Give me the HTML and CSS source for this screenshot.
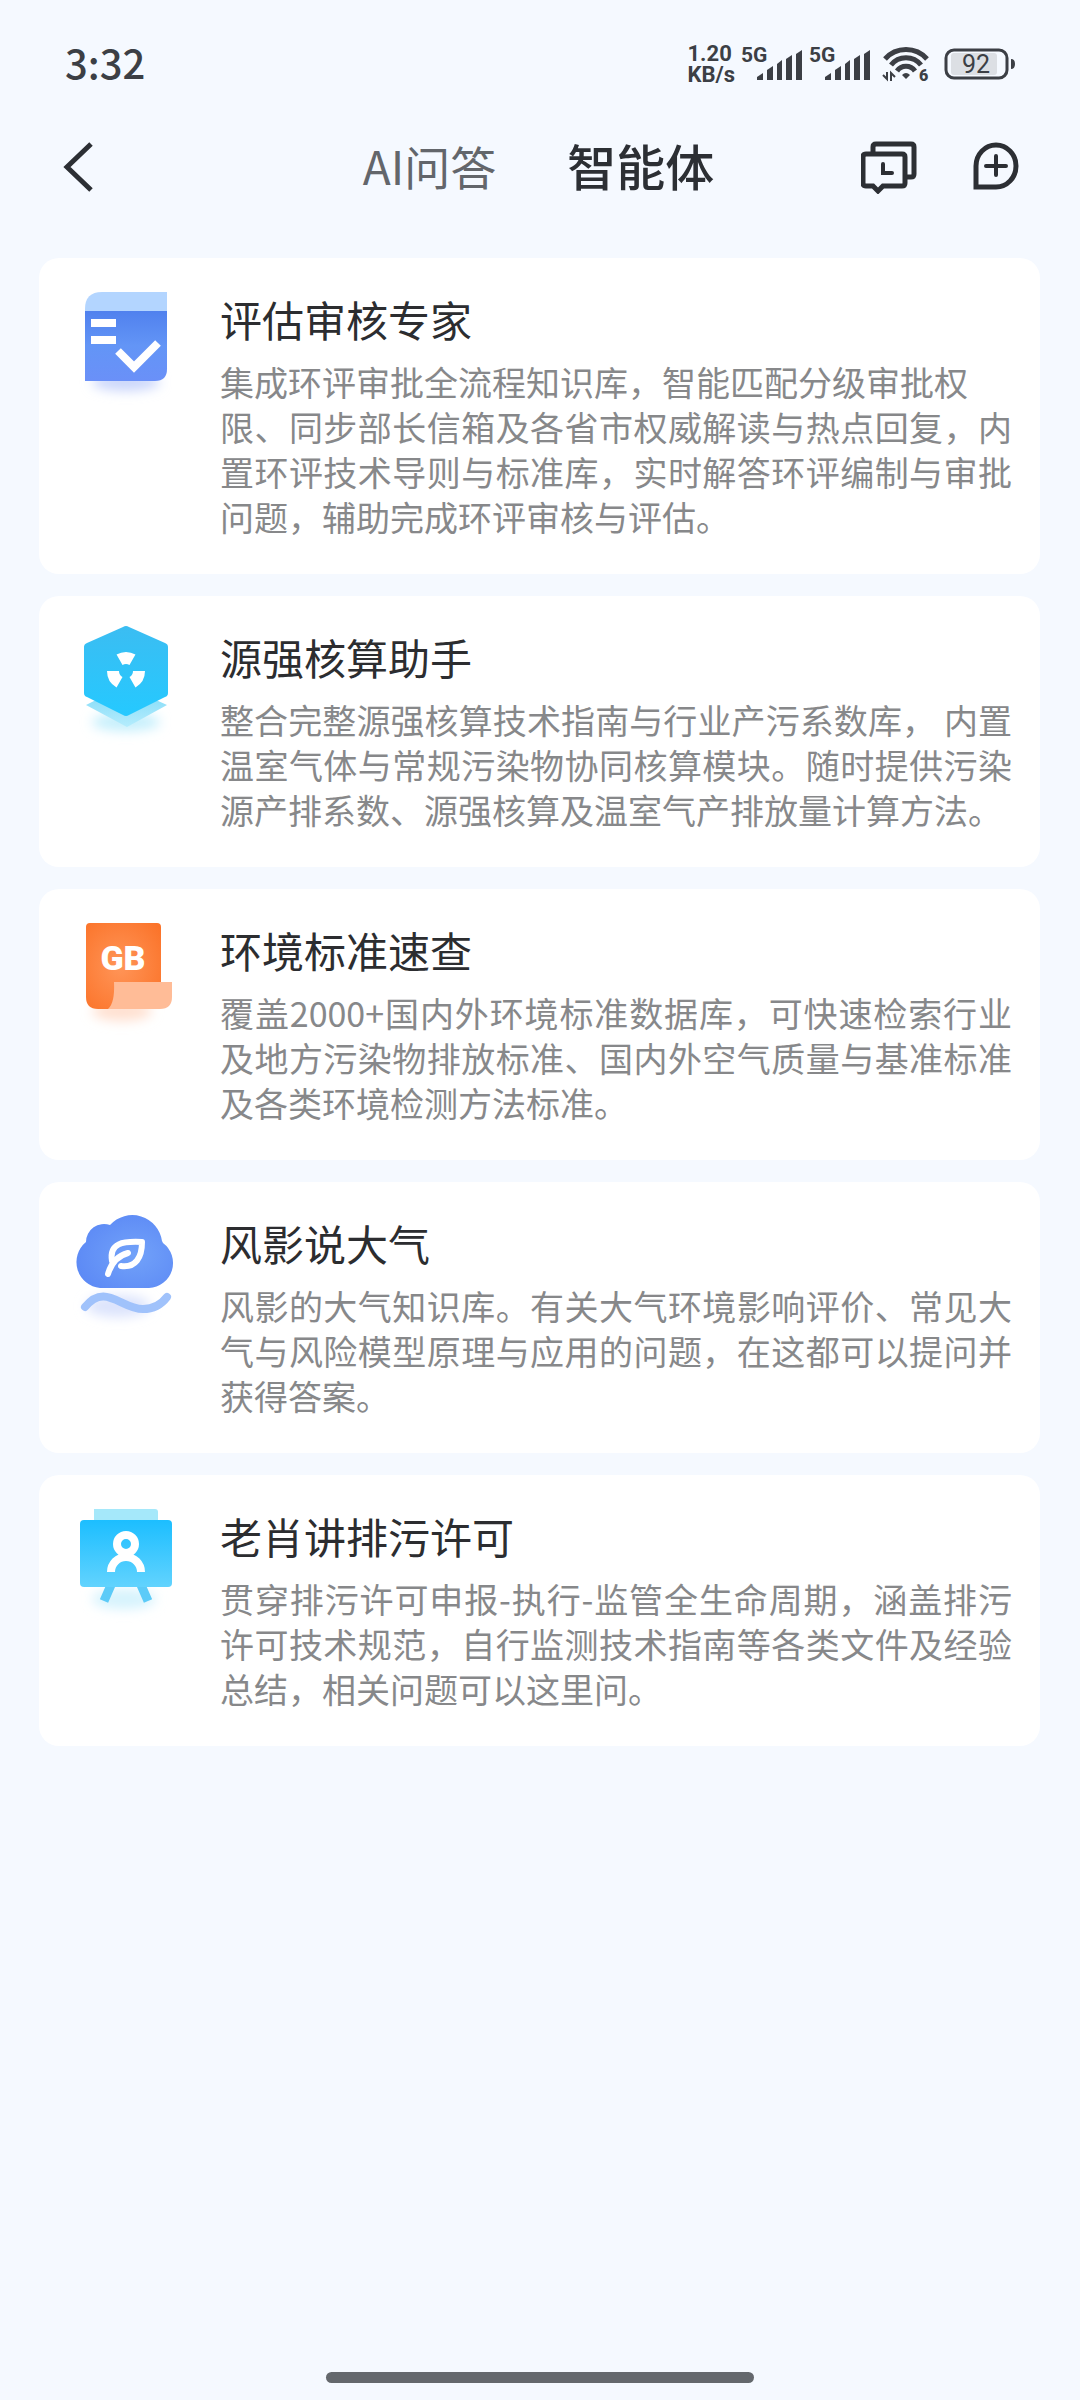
FILE: index.html
```html
<!DOCTYPE html>
<html lang="zh-CN">
<head>
  <meta charset="UTF-8" />
  <meta name="viewport" content="width=device-width, initial-scale=1.0" />
  <title>智能体</title>
  <link rel="stylesheet" href="styles.css">
</head>
<body>
  <div class="status-bar">
    <span class="time">3:32</span>
    <div class="status-icons">
      <span class="speed">1.20<br>KB/s</span>
      <svg class="signal" viewBox="0 -8 62 52">
        <text x="0" y="16">5G</text>
        <path d="M16 34v-3l6-4v7zM26 34V24l6-4v14zM36 34V18l5-4v20zM45 34V13l6-4v25zM55 34V8l6-4v30z" />
      </svg>
      <svg class="signal" viewBox="0 -8 62 52">
        <text x="0" y="16">5G</text>
        <path d="M16 34v-3l6-4v7zM26 34V24l6-4v14zM36 34V18l5-4v20zM45 34V13l6-4v25zM55 34V8l6-4v30z" />
      </svg>
      <svg class="wifi" viewBox="0 -8 50 52">
        <g fill="none" stroke="#3c3f45" stroke-width="5">
          <path d="M3 13a28 28 0 0 1 42 0" />
          <path d="M9 19a19 19 0 0 1 30 0" />
          <path d="M15 25a11 11 0 0 1 18 0" />
        </g>
        <path d="M20 29q4-4 8 0l-4 4z" />
        <path d="M5 26v7l-4-4M9 35v-8l4 4" fill="none" stroke="#3c3f45" stroke-width="2" />
        <text x="37" y="35">6</text>
      </svg>
      <svg class="battery" viewBox="0 -4 71 40">
        <rect x="7" y="5" width="46" height="22" rx="3" fill="#dcdfe4" />
        <rect x="2" y="2" width="61" height="28" rx="8" fill="none" stroke="#3c3f45" stroke-width="3" />
        <path d="M67 11q4 0 4 5t-4 5z" />
        <text x="32" y="25" text-anchor="middle">92</text>
      </svg>
    </div>
  </div>

  <header>
    <button class="icon-btn" aria-label="返回">
      <svg width="48" height="54" viewBox="0 0 48 54">
        <path d="M41 4L17 27l24 23" stroke-width="5" />
      </svg>
    </button>
    <nav>
      <button class="tab">AI问答</button>
      <button class="tab active">智能体</button>
    </nav>
    <div class="actions">
      <button class="icon-btn" aria-label="历史记录">
        <svg width="56" height="54" viewBox="0 0 56 54">
          <path d="M12 12V7q0-3 3-3h35q3 0 3 3v27q0 3-3 3h-5" stroke-width="5" />
          <path d="M5 14h36q3 0 3 3v26q0 3-3 3H22l-5 5-5-5H5q-3 0-3-3V17q0-3 3-3z" stroke-width="5" />
          <path d="M22 24v9h9" stroke-width="4" stroke-linecap="round" />
        </svg>
      </button>
      <button class="icon-btn" aria-label="新建对话">
        <svg width="46" height="54" viewBox="0 0 46 54">
          <path d="M3 47V26a20 21 0 1 1 20 21z" stroke-width="5" />
          <path d="M23 16v19M13 26h20" stroke-width="4" stroke-linecap="round" />
        </svg>
      </button>
    </div>
  </header>

  <main class="list">
    <article class="card">
      <svg class="card-icon" viewBox="0 0 120 130">
        <defs>
          <radialGradient id="blue" cx="0.6" cy="0.55" r="0.7">
            <stop offset="0" stop-color="#72a2f9" />
            <stop offset="1" stop-color="#5a87f5" />
          </radialGradient>
          <linearGradient id="page" x1="0" y1="0" x2="0" y2="1">
            <stop offset="0" stop-color="#5081ee" />
            <stop offset="0.5" stop-color="#6395f6" />
            <stop offset="1" stop-color="#6a90f8" />
          </linearGradient>
          <filter id="soft" x="-30%" y="-100%" width="160%" height="300%">
            <feGaussianBlur stdDeviation="6" />
          </filter>
        </defs>
        <ellipse cx="60" cy="104" rx="34" ry="9" fill="#c9d5fb" filter="url(#soft)" />
        <path d="M19 34v-3q0-17 17-17h65v20z" fill="#b3d5ff" />
        <path d="M19 33h82v58q0 12-12 12H19z" fill="url(#page)" />
        <path d="M25 41h25v8H25zM25 58h25v8H25z" fill="#fff" />
        <path d="M52 73l16 16 24-24" fill="none" stroke="#fff" stroke-width="8" />
      </svg>
      <div class="card-text">
        <h2>评估审核专家</h2>
        <p>集成环评审批全流程知识库，智能匹配分级审批权<br>限、同步部长信箱及各省市权威解读与热点回复，内置环评技术导则与标准库，实时解答环评编制与审批问题，辅助完成环评审核与评估。</p>
      </div>
    </article>

    <article class="card">
      <svg class="card-icon" viewBox="0 0 120 130">
        <defs>
          <linearGradient id="cyan" x1="0" y1="0" x2="0" y2="1">
            <stop offset="0" stop-color="#3bbdf2" />
            <stop offset="1" stop-color="#25c9ff" />
          </linearGradient>
          <linearGradient id="wedge" x1="0" y1="0" x2="0" y2="1">
            <stop offset="0" stop-color="#8fdff9" />
            <stop offset="1" stop-color="#b5edfd" />
          </linearGradient>
        </defs>
        <ellipse cx="60" cy="106" rx="34" ry="9" fill="#c4effc" filter="url(#soft)" />
        <path d="M20 89l10-5h60l11 5-40 22z" fill="url(#wedge)" />
        <path d="M57 11q3-2 6 0l36 16q3 1 3 4v46q0 3-3 4L63 99q-3 2-6 0L21 81q-3-1-3-4V31q0-3 3-4z" fill="url(#cyan)" />
        <circle cx="60" cy="55" r="13" fill="none" stroke="#fff" stroke-width="12" pathLength="6" stroke-dasharray="1 1" />
      </svg>
      <div class="card-text">
        <h2>源强核算助手</h2>
        <p>整合完整源强核算技术指南与行业产污系数库， 内置温室气体与常规污染物协同核算模块。随时提供污染源产排系数、源强核算及温室气产排放量计算方法。</p>
      </div>
    </article>

    <article class="card">
      <svg class="card-icon" viewBox="0 0 120 130">
        <defs>
          <radialGradient id="orange" cx="0.45" cy="0.5" r="0.7">
            <stop offset="0" stop-color="#ff9558" />
            <stop offset="1" stop-color="#fb7329" />
          </radialGradient>
        </defs>
        <ellipse cx="56" cy="102" rx="30" ry="10" fill="#ffe0d0" filter="url(#soft)" />
        <path d="M24 14h67q4 0 4 4v62H52l-6 20H32q-12 0-12-12V18q0-4 4-4z" fill="url(#orange)" />
        <path d="M48 73h58v15q0 12-12 12H42q7-6 6-27z" fill="#ffbc97" />
        <text class="gb" x="57" y="61" text-anchor="middle">GB</text>
      </svg>
      <div class="card-text">
        <h2>环境标准速查</h2>
        <p>覆盖2000+国内外环境标准数据库，可快速检索行业及地方污染物排放标准、国内外空气质量与基准标准及各类环境检测方法标准。</p>
      </div>
    </article>

    <article class="card">
      <svg class="card-icon" viewBox="0 0 120 130">
        <ellipse cx="52" cy="104" rx="32" ry="11" fill="#dbe3fc" filter="url(#soft)" />
        <path d="M34 86a26 26 0 0 1-14-46 18 18 0 0 1 24-17 30 30 0 0 1 52 16l1 2a25 25 0 0 1-14 45z" fill="url(#blue)" />
        <g fill="none" stroke="#fff" stroke-width="6" stroke-linecap="round" stroke-linejoin="round">
          <path d="M46 59c-3-18 11-20 30-19 0 15-6 26-21 24" />
          <path d="M42 72q5-17 20-21" />
        </g>
        <path d="M19 105c20-25 36 2 58 2 11 0 18-4 24-12" fill="none" stroke="#a0c2fb" stroke-width="8" stroke-linecap="round" />
      </svg>
      <div class="card-text">
        <h2>风影说大气</h2>
        <p>风影的大气知识库。有关大气环境影响评价、常见大气与风险模型原理与应用的问题，在这都可以提问并获得答案。</p>
      </div>
    </article>

    <article class="card">
      <svg class="card-icon" viewBox="0 0 120 130">
        <defs>
          <linearGradient id="board" x1="0" y1="0" x2="0" y2="1">
            <stop offset="0" stop-color="#1cbeff" />
            <stop offset="1" stop-color="#62d3fe" />
          </linearGradient>
        </defs>
        <ellipse cx="58" cy="104" rx="32" ry="10" fill="#d5f3fd" filter="url(#soft)" />
        <path d="M28 14h61q3 0 3 3v10H28z" fill="#a5e8fa" />
        <path d="M45 90l-7 16M75 90l7 16" stroke="#5ccbf8" stroke-width="9" />
        <rect x="14" y="25" width="92" height="67" rx="4" fill="url(#board)" />
        <circle cx="60" cy="49" r="9" fill="none" stroke="#fff" stroke-width="8" />
        <path d="M45 77a15 15 0 0 1 30 0" fill="none" stroke="#fff" stroke-width="8" />
      </svg>
      <div class="card-text">
        <h2>老肖讲排污许可</h2>
        <p>贯穿排污许可申报-执行-监管全生命周期，涵盖排污许可技术规范，自行监测技术指南等各类文件及经验总结，相关问题可以这里问。</p>
      </div>
    </article>
  </main>

  <div class="home-bar"></div>
</body>
</html>
```

FILE: styles.css
```css
* {
  box-sizing: border-box;
  margin: 0;
  padding: 0;
}
body {
  font-family: 'Noto Sans CJK SC', 'Noto Sans', sans-serif;
  background: #f5f9ff;
  color: #2c2d30;
  min-height: 100vh;
  display: flex;
  flex-direction: column;
}
button {
  font-family: inherit;
  background: none;
  border: none;
  cursor: pointer;
}
svg {
  display: block;
}

.status-bar {
  display: flex;
  justify-content: space-between;
  align-items: center;
  height: 128px;
  padding: 0 65px;
  color: #3c3f45;
}
.time {
  font-size: 40px;
  font-weight: 500;
  padding-bottom: 4px;
}
.status-icons {
  display: flex;
  align-items: center;
  gap: 6px;
  font-family: Roboto, sans-serif;
}
.status-icons svg {
  fill: #3c3f45;
}
.speed {
  font-size: 22px;
  font-weight: bold;
  line-height: 21px;
}
.signal {
  width: 62px;
  height: 52px;
}
.signal text {
  font-size: 21px;
  font-weight: bold;
}
.wifi {
  width: 50px;
  height: 52px;
  margin: 0 6px 0 5px;
}
.wifi text {
  font-size: 16px;
  font-weight: 900;
}
.battery {
  width: 71px;
  height: 40px;
}
.battery text {
  font-size: 25px;
}

header {
  display: flex;
  justify-content: space-between;
  align-items: center;
  height: 78px;
  padding: 0 61px 0 50px;
}
header svg {
  fill: none;
  stroke: #2c2f34;
}
nav {
  flex: 1;
  display: flex;
  justify-content: center;
  align-items: center;
  gap: 71px;
  padding-left: 118px;
  padding-bottom: 4px;
}
.tab {
  font-size: 46px;
  line-height: 60px;
  color: #63666b;
}
.tab.active {
  font-size: 49px;
  font-weight: 500;
  color: #2c2f34;
}
.actions {
  display: flex;
  gap: 56px;
}

.list {
  display: flex;
  flex-direction: column;
  gap: 22px;
  padding: 52px 40px 60px 39px;
}
.card {
  display: flex;
  align-items: flex-start;
  gap: 34px;
  padding: 0 28px 35px 27px;
  background: #fff;
  border-radius: 20px;
}
.card-icon {
  flex: none;
  width: 120px;
  height: 130px;
  margin-top: 20px;
}
.gb {
  font-family: Roboto, sans-serif;
  font-size: 34px;
  font-weight: 900;
  fill: #fff;
}
.card-text {
  flex: 1;
  padding-top: 34px;
}
.card h2 {
  font-size: 42px;
  font-weight: normal;
  line-height: 54px;
  margin-bottom: 13px;
}
.card p {
  font-size: 34px;
  line-height: 45px;
  color: #87888a;
  text-align: justify;
}

.home-bar {
  width: 428px;
  max-width: 40%;
  height: 11px;
  margin: auto auto 17px;
  border-radius: 6px;
  background: #64686d;
}
```
